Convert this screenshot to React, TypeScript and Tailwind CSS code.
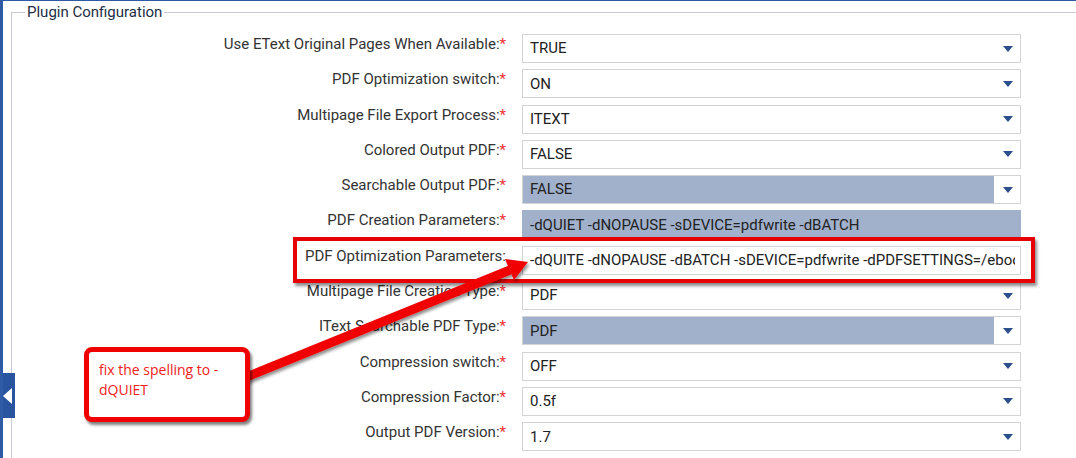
import React from "react";

type Row = {
  label: string;
  value: string;
  req: boolean;
  kind: "select" | "selectShaded" | "textShaded" | "text";
};

const rows: Row[] = [
  { label: "Use EText Original Pages When Available:", value: "TRUE", req: true, kind: "select" },
  { label: "PDF Optimization switch:", value: "ON", req: true, kind: "select" },
  { label: "Multipage File Export Process:", value: "ITEXT", req: true, kind: "select" },
  { label: "Colored Output PDF:", value: "FALSE", req: true, kind: "select" },
  { label: "Searchable Output PDF:", value: "FALSE", req: true, kind: "selectShaded" },
  { label: "PDF Creation Parameters:", value: "-dQUIET -dNOPAUSE -sDEVICE=pdfwrite -dBATCH", req: true, kind: "textShaded" },
  { label: "PDF Optimization Parameters:", value: "-dQUITE -dNOPAUSE -dBATCH -sDEVICE=pdfwrite -dPDFSETTINGS=/ebook", req: false, kind: "text" },
  { label: "Multipage File Creation Type:", value: "PDF", req: true, kind: "select" },
  { label: "IText Searchable PDF Type:", value: "PDF", req: true, kind: "selectShaded" },
  { label: "Compression switch:", value: "OFF", req: true, kind: "select" },
  { label: "Compression Factor:", value: "0.5f", req: true, kind: "select" },
  { label: "Output PDF Version:", value: "1.7", req: true, kind: "select" },
];

function Caret() {
  return (
    <svg width="10" height="6" viewBox="0 0 10 6" className="block">
      <path d="M0 0 H10 L5 6 Z" fill="#2b4f8c" />
    </svg>
  );
}

function Field({ row }: { row: Row }) {
  if (row.kind === "select") {
    return (
      <div className="flex items-center h-[29px] w-[499px] border border-[#d4d4d4] bg-white">
        <span className="flex-1 pl-[7px] text-[15px] text-[#222]">{row.value}</span>
        <span className="pr-[7px]"><Caret /></span>
      </div>
    );
  }
  if (row.kind === "selectShaded") {
    return (
      <div className="flex h-[29px] w-[499px] border border-[#d4d4d4] bg-white">
        <span className="flex-1 flex items-center pl-[7px] text-[15px] text-[#222] bg-[#a1b1cc]">{row.value}</span>
        <span className="w-[26px] flex items-center justify-center pl-[2px]"><Caret /></span>
      </div>
    );
  }
  if (row.kind === "textShaded") {
    return (
      <div className="flex items-center h-[29px] w-[499px] bg-[#a1b1cc] border border-[#a1b1cc]">
        <span className="pl-[7px] text-[15px] text-[#222] whitespace-nowrap">{row.value}</span>
      </div>
    );
  }
  return (
    <div className="flex items-center h-[29px] w-[499px] border border-[#d4d4d4] bg-white pl-[7px] pr-[5px]">
      <div className="flex-1 overflow-hidden">
        <span className="text-[15px] text-[#222] whitespace-nowrap">{row.value}</span>
      </div>
    </div>
  );
}

export default function App() {
  return (
    <div className="relative w-[1076px] h-[458px] overflow-hidden bg-white border-t border-l-[3px] border-[#2f5aa6] font-['Roboto',sans-serif]">
      <fieldset className="ml-[8px] mt-[2px] w-[1200px] h-[600px] border-t border-l border-[#c8c9d3] pt-[13px]">
        <legend className="ml-[13px] px-[2px] text-[15px] leading-[18px] text-[#1d2e45]">Plugin Configuration</legend>
        <div className="flex flex-col gap-[6.3px]">
          {rows.map((r) => (
            <div key={r.label} className="flex items-start">
              <div className="w-[494px] text-right text-[15px] leading-[20px] text-[#333] whitespace-nowrap">
                {r.label}
                {r.req && <span className="text-[#ee3333]">*</span>}
              </div>
              <div className="ml-[16px]">
                <Field row={r} />
              </div>
            </div>
          ))}
        </div>
      </fieldset>

      {/* left collapse tab */}
      <div className="absolute left-[-3px] top-[372px] w-[15px] h-[45px] bg-[#2b54a0] flex items-center pl-[3px]">
        <svg width="9" height="16" viewBox="0 0 9 16">
          <path d="M9 0 V16 L0 8 Z" fill="#ffffff" />
        </svg>
      </div>

      {/* red highlight box */}
      <div className="absolute left-[290px] top-[236px] w-[742px] h-[46px] border-[4px] border-[#e60000] shadow-[2px_3px_3px_rgba(0,0,0,0.45)]" />

      {/* arrow */}
      <svg className="absolute left-[-3px] top-[-1px]" width="1076" height="458" viewBox="0 0 1076 458">
        <defs>
          <filter id="sh" x="-10%" y="-10%" width="120%" height="130%">
            <feDropShadow dx="1.5" dy="2.5" stdDeviation="1.5" floodColor="#000" floodOpacity="0.45" />
          </filter>
        </defs>
        <g filter="url(#sh)">
          <line x1="244" y1="378" x2="510" y2="270" stroke="#f00000" strokeWidth="9" />
          <path d="M528 262 L514 280 L505 259 Z" fill="#f00000" />
        </g>
      </svg>

      {/* callout */}
      <div className="absolute left-[81px] top-[346px] w-[166px] h-[75px] bg-white border-[5px] border-[#f00000] rounded-[8px] shadow-[2px_3px_3px_rgba(0,0,0,0.5)] pl-[10px] pt-[8px] font-['Open_Sans',sans-serif] text-[14px] leading-[20px] text-[#f02020]">
        fix the spelling to -<br />dQUIET
      </div>
    </div>
  );
}
